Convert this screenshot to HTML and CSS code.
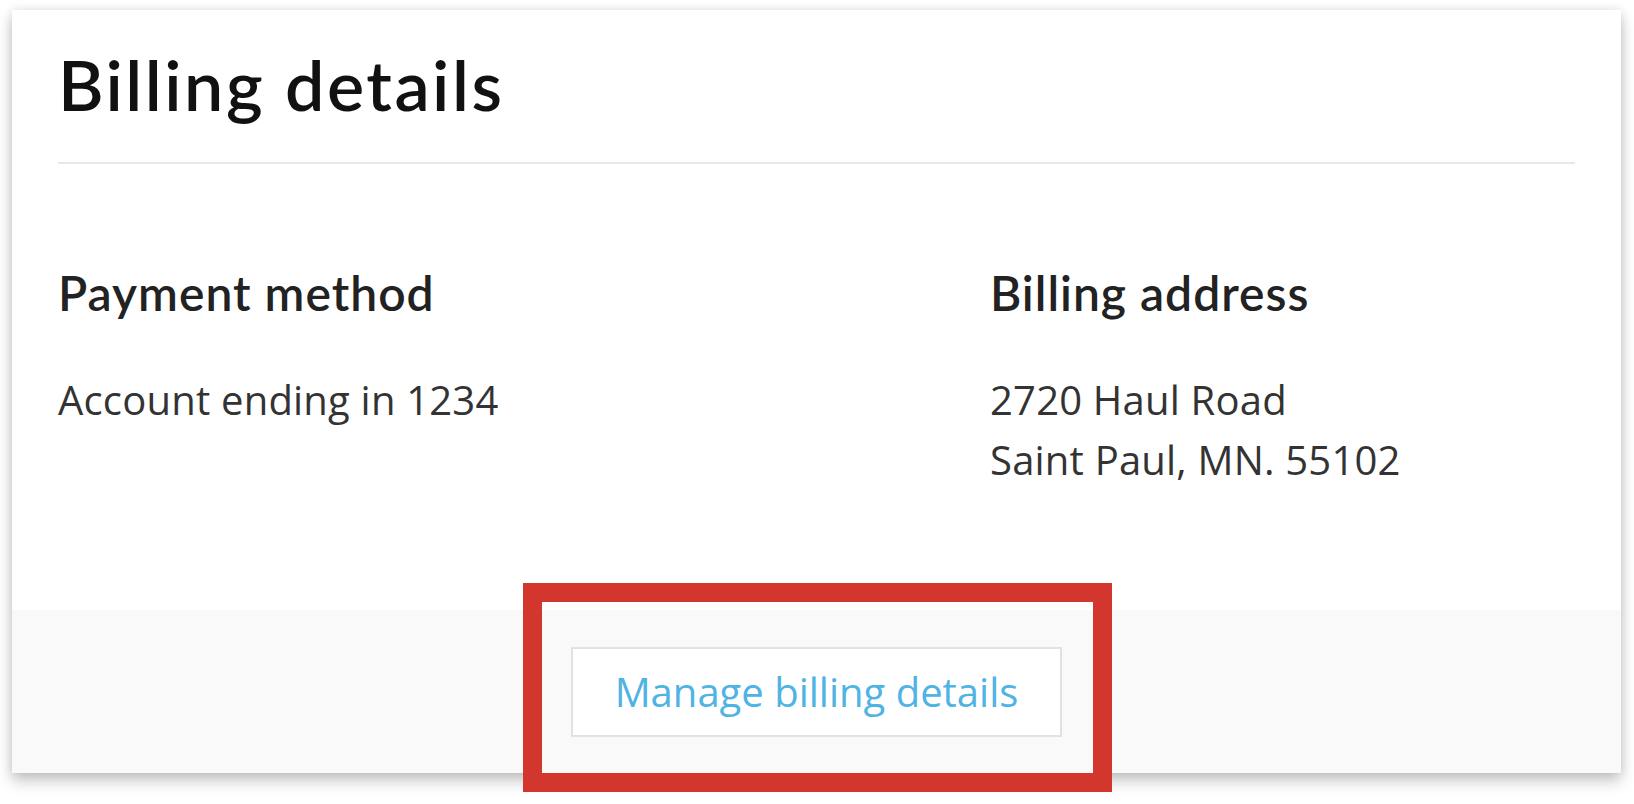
FILE: index.html
```html
<!DOCTYPE html>
<html lang="en">
<head>
  <meta charset="UTF-8">
  <meta name="viewport" content="width=device-width, initial-scale=1.0">
  <title>Billing details</title>
  <link rel="stylesheet" href="styles.css">
</head>
<body>
  <div class="card">
    <div class="card-header">
      <h1>Billing details</h1>
    </div>

    <div class="card-body">
      <div class="col">
        <h2>Payment method</h2>
        <p>Account ending in 1234</p>
      </div>
      <div class="col">
        <h2>Billing address</h2>
        <p>2720 Haul Road<br>Saint Paul, MN. 55102</p>
      </div>
    </div>

    <div class="card-footer">
      <div class="action">
        <button class="btn-manage">Manage billing details</button>
        <span class="highlight"></span>
      </div>
    </div>
  </div>
</body>
</html>
```

FILE: styles.css
```css
body {
  margin: 0;
  padding: 10px 13px 31px 12px;
  background: #fff;
  font-family: "Open Sans", sans-serif;
}
.card {
  background: #fff;
  box-shadow: 0 8px 14px rgba(0,0,0,0.22), 0 0 10px rgba(0,0,0,0.1);
}
.card-header {
  margin: 0 46px;
  padding: 32px 0 36px;
  border-bottom: 2px solid #e8e8e8;
}
h1 {
  margin: 0;
  font-family: Lato, sans-serif;
  font-weight: 600;
  font-size: 70px;
  line-height: 1.2;
  letter-spacing: 2.5px;
  color: #111;
}
.card-body {
  display: grid;
  grid-template-columns: 932px 1fr;
  padding: 100px 46px 120px;
}
h2 {
  margin: 0 0 48px;
  font-family: Lato, sans-serif;
  font-weight: 600;
  font-size: 48px;
  line-height: 1.2;
  letter-spacing: 1px;
  color: #222;
}
.col p {
  margin: 0;
  font-size: 40px;
  line-height: 60px;
  letter-spacing: 0.2px;
  color: #333;
}
.card-footer {
  display: flex;
  justify-content: center;
  padding: 37px 0 36px;
  background: #f9f9f9;
}
.action {
  position: relative;
}
.btn-manage {
  display: block;
  height: 90px;
  padding: 0 42px;
  border: 2px solid #e2e2e2;
  background: #fff;
  font-family: "Open Sans", sans-serif;
  font-size: 40px;
  color: #4fb3e3;
  cursor: pointer;
}
.highlight {
  position: absolute;
  top: -64px;
  left: -48px;
  right: -50px;
  bottom: -55px;
  border: 19px solid #d2362c;
}
```
